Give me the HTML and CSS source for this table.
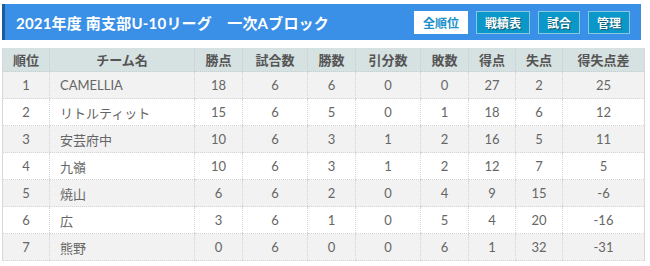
FILE: index.html
```html
<!DOCTYPE html>
<html lang="ja">
<head>
<meta charset="utf-8">
<link rel="stylesheet" href="styles.css">
</head>
<body>
<div class="wrap">
  <div class="bar">
    <div class="title">2021年度 南支部U-10リーグ　一次Aブロック</div>
    <div class="btns">
      <span class="btn active">全順位</span>
      <span class="btn">戦績表</span>
      <span class="btn">試合</span>
      <span class="btn">管理</span>
    </div>
  </div>
  <table class="standings">
    <colgroup>
      <col style="width:47px"><col style="width:145px"><col style="width:48px"><col style="width:65px"><col style="width:48px"><col style="width:65px"><col style="width:48px"><col style="width:47px"><col style="width:47px"><col style="width:82px">
    </colgroup>
    <thead>
      <tr><th>順位</th><th>チーム名</th><th>勝点</th><th>試合数</th><th>勝数</th><th>引分数</th><th>敗数</th><th>得点</th><th>失点</th><th>得失点差</th></tr>
    </thead>
    <tbody>
      <tr><td>1</td><td class="name">CAMELLIA</td><td>18</td><td>6</td><td>6</td><td>0</td><td>0</td><td>27</td><td>2</td><td>25</td></tr>
      <tr><td>2</td><td class="name">リトルティット</td><td>15</td><td>6</td><td>5</td><td>0</td><td>1</td><td>18</td><td>6</td><td>12</td></tr>
      <tr><td>3</td><td class="name">安芸府中</td><td>10</td><td>6</td><td>3</td><td>1</td><td>2</td><td>16</td><td>5</td><td>11</td></tr>
      <tr><td>4</td><td class="name">九嶺</td><td>10</td><td>6</td><td>3</td><td>1</td><td>2</td><td>12</td><td>7</td><td>5</td></tr>
      <tr><td>5</td><td class="name">焼山</td><td>6</td><td>6</td><td>2</td><td>0</td><td>4</td><td>9</td><td>15</td><td>-6</td></tr>
      <tr><td>6</td><td class="name">広</td><td>3</td><td>6</td><td>1</td><td>0</td><td>5</td><td>4</td><td>20</td><td>-16</td></tr>
      <tr><td>7</td><td class="name">熊野</td><td>0</td><td>6</td><td>0</td><td>0</td><td>6</td><td>1</td><td>32</td><td>-31</td></tr>
    </tbody>
  </table>
</div>
</body>
</html>
```
FILE: styles.css
```css
html, body {
  margin: 0;
  padding: 0;
  background: #fff;
}
body {
  font-family: Lato, "Noto Sans CJK JP", sans-serif;
  color: #666;
}
.wrap {
  padding: 4px 0 0 2px;
  width: 644px;
}
.bar {
  width: 639px;
  height: 36px;
  box-sizing: border-box;
  background: #3a8fe6;
  border-left: 3px solid #1d5c9e;
  display: flex;
  align-items: center;
  padding: 0 11px 0 11px;
}
.title {
  flex: 1;
  color: #fff;
  font-weight: bold;
  font-size: 15px;
  letter-spacing: 0.2px;
}
.btns {
  display: flex;
  gap: 8px;
}
.btn {
  height: 23px;
  box-sizing: border-box;
  display: flex;
  align-items: center;
  padding: 0 8px;
  border: 1px solid #8cc8e6;
  background: #0b98c8;
  color: #fff;
  font-size: 12px;
  font-weight: bold;
  text-shadow: 1px 1px 1px rgba(0,0,0,0.45);
}
.btn.active {
  background: #fff;
  color: #1a8fca;
  border-color: #fff;
  text-shadow: none;
}
.standings {
  margin-top: 8px;
  width: 643px;
  border-collapse: collapse;
  table-layout: fixed;
  font-size: 13px;
  border-left: 1px solid #d8d8d8;
  border-right: 1px solid #d8d8d8;
}
.standings th {
  height: 23px;
  padding: 0;
  background: #d6e1e1;
  color: #555;
  font-weight: bold;
  font-size: 13px;
  border-left: 1px dotted #c6cfcf;
  border-bottom: 1px dotted #c6cfcf;
  text-align: center;
}
.standings td {
  height: 26px;
  padding: 0;
  text-align: center;
  border-left: 1px dotted #d4d4d4;
  border-bottom: 1px dotted #d4d4d4;
  color: #666;
}
.standings td.name {
  text-align: left;
  padding-left: 10px;
}
.standings tbody tr:nth-child(odd) td {
  background: #f2f2f2;
}
.standings tbody tr:nth-child(even) td {
  background: #fff;
}
```
